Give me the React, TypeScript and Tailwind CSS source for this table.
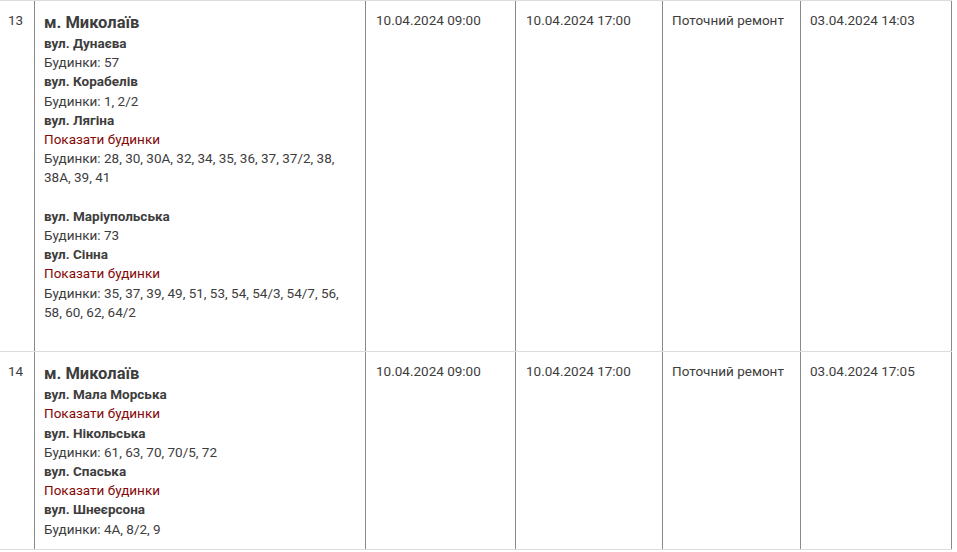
import React from 'react';

type Street = {
  name: string;
  houses?: string;
  collapsed?: boolean;
  expanded?: boolean;
};

interface Outage {
  id: number;
  city: string;
  streets: Street[];
  start: string;
  end: string;
  kind: string;
  created: string;
}

const rows: Outage[] = [
  {
    id: 13,
    city: 'м. Миколаїв',
    streets: [
      { name: 'вул. Дунаєва', houses: '57' },
      { name: 'вул. Корабелів', houses: '1, 2/2' },
      { name: 'вул. Лягіна', expanded: true, houses: '28, 30, 30А, 32, 34, 35, 36, 37, 37/2, 38, 38А, 39, 41' },
      { name: 'вул. Маріупольська', houses: '73' },
      { name: 'вул. Сінна', expanded: true, houses: '35, 37, 39, 49, 51, 53, 54, 54/3, 54/7, 56, 58, 60, 62, 64/2' },
    ],
    start: '10.04.2024 09:00',
    end: '10.04.2024 17:00',
    kind: 'Поточний ремонт',
    created: '03.04.2024 14:03',
  },
  {
    id: 14,
    city: 'м. Миколаїв',
    streets: [
      { name: 'вул. Мала Морська', collapsed: true },
      { name: 'вул. Нікольська', houses: '61, 63, 70, 70/5, 72' },
      { name: 'вул. Спаська', collapsed: true },
      { name: 'вул. Шнеєрсона', houses: '4А, 8/2, 9' },
    ],
    start: '10.04.2024 09:00',
    end: '10.04.2024 17:00',
    kind: 'Поточний ремонт',
    created: '03.04.2024 17:05',
  },
];

const cell = 'border-r border-[#8a8a8a] pt-[10px] pb-[10px]';

function StreetBlock({ s }: { s: Street }) {
  return (
    <div>
      <div className="font-bold">{s.name}</div>
      {(s.collapsed || s.expanded) && <div className="text-[#850808] cursor-pointer">Показати будинки</div>}
      {s.houses && <div className={s.expanded ? 'mb-[19.2px]' : ''}>Будинки: {s.houses}</div>}
    </div>
  );
}

export default function App() {
  return (
    <div className="min-h-screen bg-white font-['Roboto','Liberation_Sans',sans-serif] text-[13.5px] leading-[19.2px] text-[#3d3d3d]">
      <div className="w-[952px] border-t border-[#dcdcdc]">
        {rows.map((r) => (
          <div key={r.id} className="flex border-b border-[#dcdcdc]">
            <div className={`${cell} w-[35px] pl-[8px]`}>{r.id}</div>
            <div className={`${cell} w-[331px] pl-[9px] pr-[10px]`}>
              <div className="text-[16.5px] font-bold leading-[23px]">{r.city}</div>
              {r.streets.map((s) => (
                <StreetBlock key={s.name} s={s} />
              ))}
            </div>
            <div className={`${cell} w-[150px] pl-[10px]`}>{r.start}</div>
            <div className={`${cell} w-[147px] pl-[10px]`}>{r.end}</div>
            <div className={`${cell} w-[138px] pl-[9px]`}>{r.kind}</div>
            <div className={`${cell} w-[151px] pl-[9px]`}>{r.created}</div>
          </div>
        ))}
      </div>
    </div>
  );
}
